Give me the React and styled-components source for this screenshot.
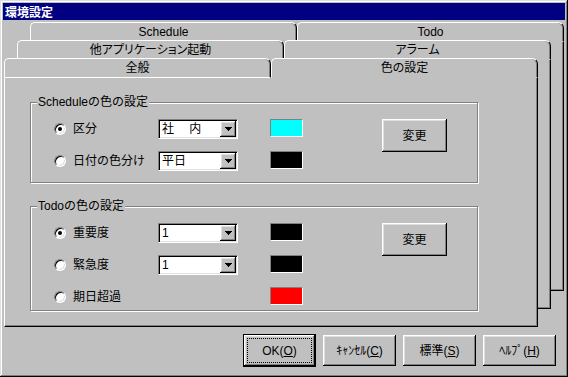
import React from 'react'
import styled, { createGlobalStyle, css } from 'styled-components'

const GlobalStyle = createGlobalStyle`
  * {
    box-sizing: border-box;
  }
  html,
  body {
    margin: 0;
    padding: 0;
    background: #c0c0c0;
  }
  body {
    font-family: 'Liberation Sans', 'Noto Sans CJK JP', sans-serif;
    font-size: 12px;
    color: #000;
  }
`

const raised = css`
  box-shadow: inset -1px -1px 0 #000, inset 1px 1px 0 #fff, inset -2px -2px 0 #808080,
    inset 2px 2px 0 #dfdfdf;
`

const sunken = css`
  border: 1px solid;
  border-color: #808080 #fff #fff #808080;
`

const Window = styled.div`
  display: flex;
  flex-direction: column;
  width: 568px;
  height: 377px;
  padding: 3px;
  background: #c0c0c0;
  box-shadow: inset -1px -1px 0 #000, inset 1px 1px 0 #dfdfdf, inset -2px -2px 0 #808080,
    inset 2px 2px 0 #fff;
`

const TitleBar = styled.div`
  height: 17px;
  padding-left: 2px;
  background: #000080;
  color: #fff;
  font-family: 'Noto Sans CJK JP', sans-serif;
  font-weight: bold;
  line-height: 17px;
`

const SheetStack = styled.div`
  display: grid;
  margin: 2px 0 0 1px;
`

const Sheet = styled.div`
  grid-area: 1 / 1;
  align-self: start;
  justify-self: start;
  display: flex;
  flex-direction: column;
  width: 534px;
  height: 269px;
  margin-left: ${({ $depth }) => $depth * 13}px;
  margin-top: ${({ $depth }) => (2 - $depth) * 18}px;
`

const TabRow = styled.div`
  display: flex;
  height: 20px;
`

const Tab = styled.div`
  flex: 1;
  display: flex;
  align-items: center;
  justify-content: center;
  background: #c0c0c0;
  border-top: 1px solid #fff;
  border-left: 1px solid #fff;
  border-right: 1px solid #000;
  border-bottom: 1px solid ${({ $underline }) => ($underline ? '#fff' : '#c0c0c0')};
  border-radius: 5px 6px 0 0;
  box-shadow: inset -1px 0 0 #808080;
  line-height: 14px;
  white-space: nowrap;
  font-feature-settings: 'palt';
`

const SheetBody = styled.div`
  flex: 1;
  background: #c0c0c0;
  border-left: 1px solid #fff;
  border-right: 1px solid #000;
  border-bottom: 1px solid #000;
  box-shadow: inset -1px -1px 0 #808080;
  padding: 24px 0 0 25px;
`

const GroupBox = styled.div`
  position: relative;
  width: 448px;
  border: 1px solid #808080;
  box-shadow: inset 1px 1px 0 #fff, 1px 1px 0 #fff;
  padding: 16px 0 ${({ $padBottom }) => $padBottom}px 23px;
  & + & {
    margin-top: 23px;
  }
`

const Legend = styled.span`
  position: absolute;
  top: -8px;
  left: 6px;
  padding: 0 1px;
  background: #c0c0c0;
  line-height: 14px;
  white-space: nowrap;
`

const OptionGrid = styled.div`
  display: grid;
  grid-template-columns: 104px 112px 112px 65px;
  grid-auto-rows: 20px;
  row-gap: 12px;
`

const RadioLabel = styled.label`
  display: flex;
  align-items: center;
  gap: 7px;
  white-space: nowrap;
  line-height: 14px;
`

const RadioDot = styled.span`
  display: flex;
  align-items: center;
  justify-content: center;
  width: 12px;
  height: 12px;
  border-radius: 50%;
  ${sunken}
  box-shadow: inset 1px 1px 0 #000, inset -1px -1px 0 #dfdfdf;
  background: #fff;
  &::after {
    content: '';
    width: 4px;
    height: 4px;
    border-radius: 50%;
    background: ${({ $checked }) => ($checked ? '#000' : 'transparent')};
  }
`

const Select = styled.div`
  display: flex;
  width: 80px;
  height: 20px;
  padding: 1px;
  ${sunken}
  box-shadow: inset 1px 1px 0 #000, inset -1px -1px 0 #dfdfdf;
  background: #fff;
`

const SelectValue = styled.span`
  flex: 1;
  padding-left: 2px;
  line-height: 16px;
  white-space: pre;
`

const SelectArrow = styled.span`
  display: flex;
  align-items: center;
  justify-content: center;
  width: 16px;
  background: #c0c0c0;
  ${raised}
`

const Swatch = styled.span`
  align-self: start;
  width: 33px;
  height: 18px;
  ${sunken}
  background: ${({ $color }) => $color};
`

const Button = styled.button`
  position: relative;
  display: flex;
  align-items: center;
  justify-content: center;
  width: ${({ $w }) => $w}px;
  height: ${({ $h }) => $h}px;
  padding: 0;
  border: none;
  background: #c0c0c0;
  color: #000;
  font: inherit;
  line-height: 14px;
  white-space: nowrap;
  ${raised}
`

const ChangeButton = styled(Button)`
  grid-column: 4;
  grid-row: 1 / span 2;
  align-self: start;
`

const DefaultButton = styled(Button)`
  border: 1px solid #000;
  &::after {
    content: '';
    position: absolute;
    inset: 3px;
    border: 1px dotted #000;
  }
`

const Footer = styled.div`
  display: flex;
  align-items: center;
  justify-content: flex-end;
  gap: 7px;
  margin-top: 7px;
  padding-right: 9px;
`

const Arrow = () => (
  <svg width='7' height='4' viewBox='0 0 7 4' shapeRendering='crispEdges'>
    <rect x='0' y='0' width='7' height='1' fill='#000' />
    <rect x='1' y='1' width='5' height='1' fill='#000' />
    <rect x='2' y='2' width='3' height='1' fill='#000' />
    <rect x='3' y='3' width='1' height='1' fill='#000' />
  </svg>
)

const sheets = [
  { tabs: [{ label: 'Schedule' }, { label: 'Todo' }] },
  { tabs: [{ label: '他アプリケーション起動' }, { label: 'アラーム' }] },
  { tabs: [{ label: '全般' }, { label: '色の設定', active: true }], front: true },
]

const groups = [
  {
    title: 'Scheduleの色の設定',
    padBottom: 11,
    rows: [
      { label: '区分', checked: true, value: '社　 内', color: '#00ffff' },
      { label: '日付の色分け', value: '平日', color: '#000' },
    ],
  },
  {
    title: 'Todoの色の設定',
    padBottom: 3,
    rows: [
      { label: '重要度', checked: true, value: '1', color: '#000' },
      { label: '緊急度', value: '1', color: '#000' },
      { label: '期日超過', color: '#ff0000' },
    ],
  },
]

const OptionRow = ({ label, checked, value, color }) => (
  <>
    <RadioLabel>
      <RadioDot $checked={checked} />
      {label}
    </RadioLabel>
    {value ? (
      <Select>
        <SelectValue>{value}</SelectValue>
        <SelectArrow>
          <Arrow />
        </SelectArrow>
      </Select>
    ) : (
      <span />
    )}
    <Swatch $color={color} />
  </>
)

const ColorSettings = () => (
  <SheetBody>
    {groups.map((group) => (
      <GroupBox key={group.title} $padBottom={group.padBottom}>
        <Legend>{group.title}</Legend>
        <OptionGrid>
          <ChangeButton $w={65} $h={33}>
            変更
          </ChangeButton>
          {group.rows.map((row) => (
            <OptionRow key={row.label} {...row} />
          ))}
        </OptionGrid>
      </GroupBox>
    ))}
  </SheetBody>
)

const App = () => (
  <>
    <GlobalStyle />
    <Window>
      <TitleBar>環境設定</TitleBar>
      <SheetStack>
        {sheets.map((sheet, i) => (
          <Sheet key={sheet.tabs[0].label} $depth={2 - i}>
            <TabRow>
              {sheet.tabs.map((tab) => (
                <Tab key={tab.label} $underline={sheet.front && !tab.active}>
                  {tab.label}
                </Tab>
              ))}
            </TabRow>
            {sheet.front ? <ColorSettings /> : <SheetBody />}
          </Sheet>
        ))}
      </SheetStack>
      <Footer>
        <DefaultButton $w={73} $h={33}>
          OK(<u>O</u>)
        </DefaultButton>
        <Button $w={73} $h={31}>
          ｷｬﾝｾﾙ(<u>C</u>)
        </Button>
        <Button $w={73} $h={31}>
          標準(<u>S</u>)
        </Button>
        <Button $w={73} $h={31}>
          ﾍﾙﾌﾟ(<u>H</u>)
        </Button>
      </Footer>
    </Window>
  </>
)

export default App
